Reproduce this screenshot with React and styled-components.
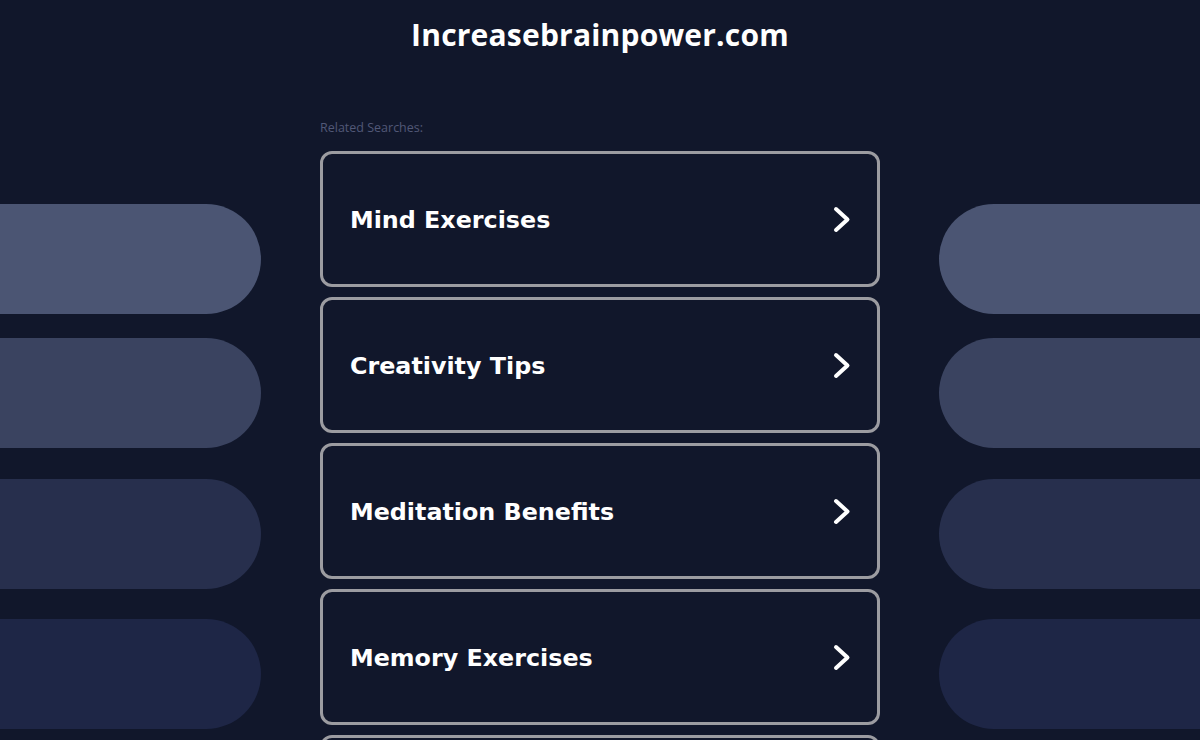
import React from "react";
import styled, { createGlobalStyle } from "styled-components";

const GlobalStyle = createGlobalStyle`
  html, body {
    margin: 0;
    padding: 0;
    background: #11172b;
  }
  body {
    font-family: "DejaVu Sans", Verdana, sans-serif;
    overflow: hidden;
  }
`;

const Page = styled.div`
  width: 1200px;
  height: 740px;
  overflow: hidden;
  background: #11172b;
`;

const Header = styled.header`
  height: 68px;
  display: flex;
  align-items: center;
  justify-content: center;
`;

const Title = styled.h1`
  margin: 0;
  font-family: "Open Sans", "Liberation Sans", sans-serif;
  font-weight: 700;
  font-size: 30px;
  color: #ffffff;
  letter-spacing: 0.2px;
`;

const Layout = styled.main`
  margin-top: 52px;
  display: grid;
  grid-template-columns: 1fr 560px 1fr;
  column-gap: 59px;
`;

const Side = styled.aside`
  padding-top: 84px;
  display: flex;
  flex-direction: column;
`;

const Pill = styled.div`
  height: 110px;
  margin-top: ${(p) => p.$gap}px;
  background: ${(p) => p.$color};
  border-radius: ${(p) => (p.$right ? "55px 0 0 55px" : "0 55px 55px 0")};
`;

const Center = styled.section`
  display: flex;
  flex-direction: column;
`;

const Label = styled.p`
  margin: 0 0 15px;
  height: 16px;
  line-height: 16px;
  font-family: "Open Sans", "Liberation Sans", sans-serif;
  font-size: 12.5px;
  color: #515877;
`;

const Card = styled.a`
  box-sizing: border-box;
  height: 136px;
  margin-bottom: 10px;
  padding: 0 25px 0 27px;
  display: flex;
  align-items: center;
  justify-content: space-between;
  border: 3px solid #9c9ca1;
  border-radius: 12px;
  background: #11172b;
  color: #ffffff;
  text-decoration: none;
  flex-shrink: 0;
`;

const CardText = styled.span`
  padding-top: 2px;
  font-family: "DejaVu Sans", Verdana, sans-serif;
  font-weight: 700;
  font-size: 23.8px;
`;

const Chevron = () => (
  <svg width="19" height="27" viewBox="0 0 19 27" fill="none">
    <path
      d="M3 3 L14.5 13.5 L3 24"
      stroke="#ffffff"
      strokeWidth="4"
      strokeLinecap="round"
      strokeLinejoin="round"
    />
  </svg>
);

const pills = [
  { color: "#4b5573", gap: 0 },
  { color: "#3a4360", gap: 24 },
  { color: "#272f4d", gap: 31 },
  { color: "#1e2646", gap: 30 },
];

const searches = [
  "Mind Exercises",
  "Creativity Tips",
  "Meditation Benefits",
  "Memory Exercises",
];

export default function App() {
  return (
    <Page>
      <GlobalStyle />
      <Header>
        <Title>Increasebrainpower.com</Title>
      </Header>
      <Layout>
        <Side>
          {pills.map((p, i) => (
            <Pill key={i} $color={p.color} $gap={p.gap} />
          ))}
        </Side>
        <Center>
          <Label>Related Searches:</Label>
          {searches.map((s) => (
            <Card key={s} href="#">
              <CardText>{s}</CardText>
              <Chevron />
            </Card>
          ))}
          {/* next result starts below the fold */}
          <Card href="#" aria-hidden="true" />
        </Center>
        <Side>
          {pills.map((p, i) => (
            <Pill key={i} $right $color={p.color} $gap={p.gap} />
          ))}
        </Side>
      </Layout>
    </Page>
  );
}
